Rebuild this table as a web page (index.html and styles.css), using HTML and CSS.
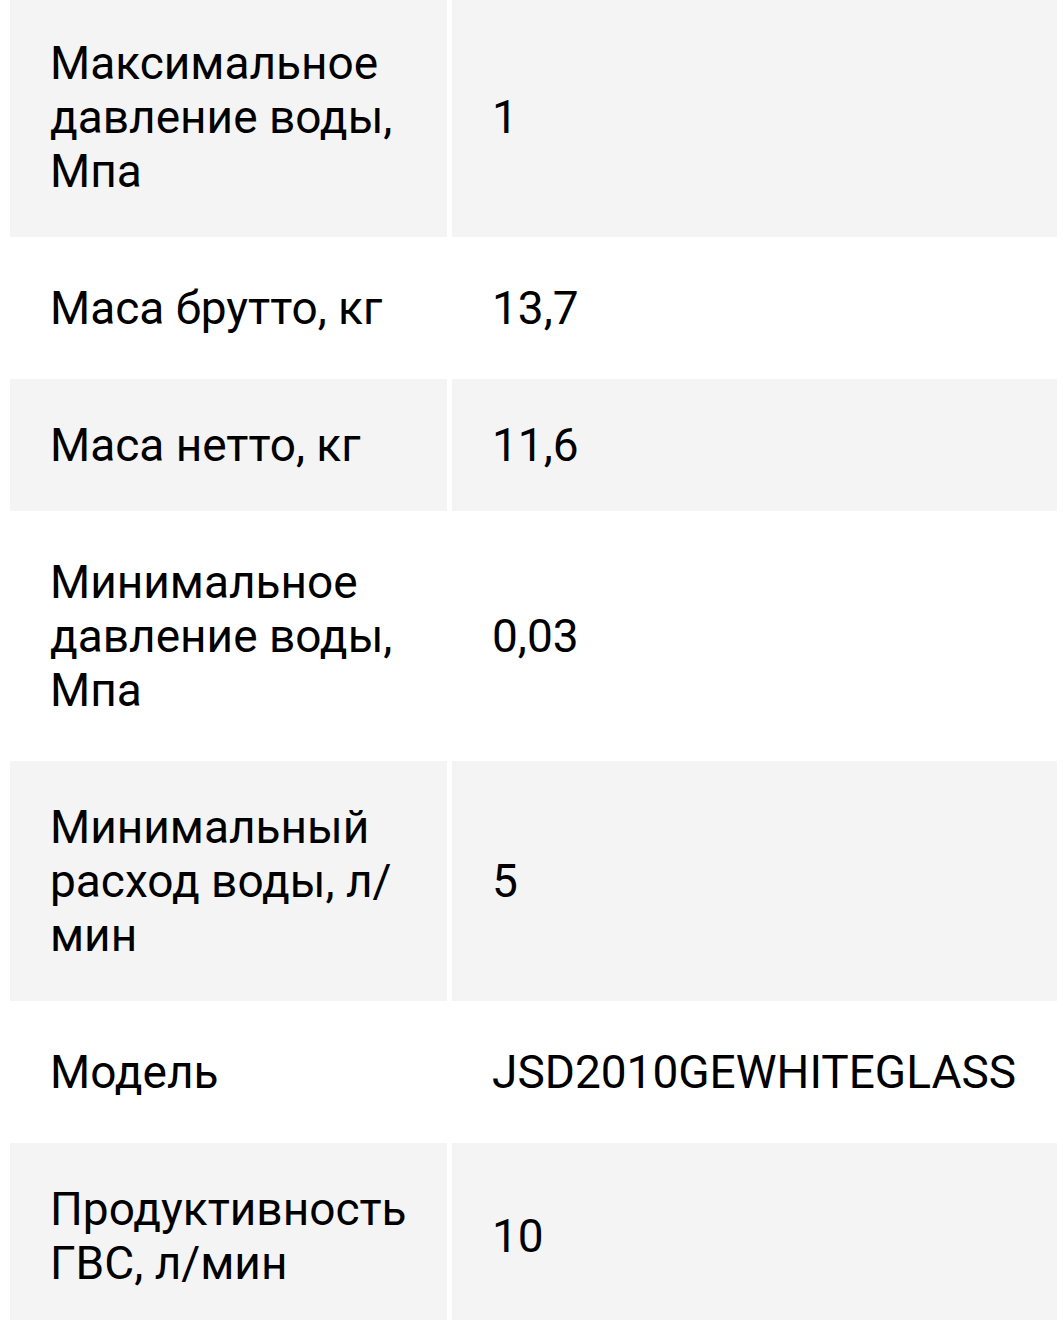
FILE: index.html
```html
<!DOCTYPE html>
<html lang="ru">
<head>
<meta charset="utf-8">
<link rel="stylesheet" href="styles.css">
</head>
<body>
<table class="specs">
  <tbody>
    <tr class="row shaded"><td class="name">Максимальное давление воды, Мпа</td><td class="value">1</td></tr>
    <tr class="row"><td class="name">Маса брутто, кг</td><td class="value">13,7</td></tr>
    <tr class="row shaded"><td class="name">Маса нетто, кг</td><td class="value">11,6</td></tr>
    <tr class="row"><td class="name">Минимальное давление воды, Мпа</td><td class="value">0,03</td></tr>
    <tr class="row shaded"><td class="name">Минимальный расход воды, л/мин</td><td class="value">5</td></tr>
    <tr class="row"><td class="name">Модель</td><td class="value">JSD2010GEWHITEGLASS</td></tr>
    <tr class="row shaded"><td class="name">Продуктивность ГВС, л/мин</td><td class="value">10</td></tr>
  </tbody>
</table>
</body>
</html>
```
FILE: styles.css
```css
html, body {
  margin: 0;
  padding: 0;
  background: #ffffff;
}
body {
  font-family: Roboto, "Noto Sans", sans-serif;
  color: #000000;
  overflow: hidden;
}
.specs {
  border-collapse: separate;
  border-spacing: 5px;
  margin: -8px 0 0 5px;
  width: 1057px;
  table-layout: fixed;
}
.specs td {
  padding: 39px 39px 39px 40px;
  font-size: 46px;
  line-height: 54px;
  vertical-align: middle;
}
.specs .name {
  width: 358px;
}
.shaded td {
  background: #f4f4f4;
}
```
